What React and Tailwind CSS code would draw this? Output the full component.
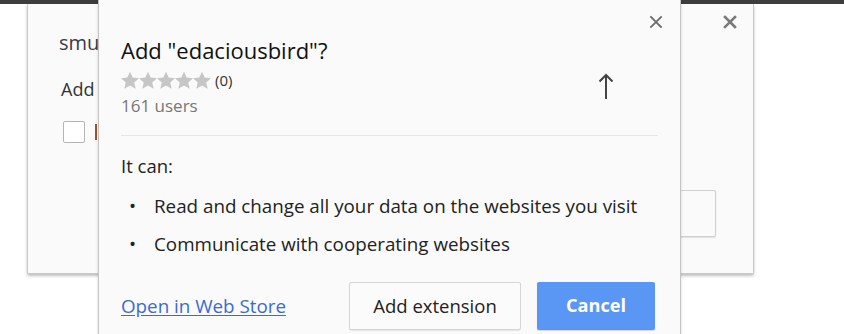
import React from 'react';

const Star = () => (
  <svg width="18" height="19" viewBox="0.5 0.5 23 23" className="block">
    <path
      d="M12 .8l3.4 7.5 8.2.8-6.2 5.5 1.9 8.1L12 18.4l-7.3 4.3 1.9-8.1L.4 9.1l8.2-.8z"
      fill="#c6c6c6"
    />
  </svg>
);

const CloseX = ({ bold }) => (
  <svg width="14" height="14" viewBox="0 0 14 14">
    <path
      d="M2 2l10 10M12 2L2 12"
      stroke={bold ? '#7a7a7a' : '#6e6e6e'}
      strokeWidth={bold ? 2.6 : 1.8}
      strokeLinecap="square"
    />
  </svg>
);

const font = { fontFamily: '"Open Sans", "Noto Sans", "Liberation Sans", sans-serif' };

const App = () => {
  return (
    <div className="relative w-[844px] h-[334px] overflow-hidden bg-white" style={font}>
      {/* window strip at the top */}
      <div className="h-[4px] w-full bg-[#3d3d3d]" />

      {/* dialog behind */}
      <div className="absolute left-[27px] top-[4px] w-[727px] h-[270px] bg-[#fafafa] border-x border-b border-[#c9c9c9] rounded-b-[2px] shadow-[0_2px_3px_rgba(0,0,0,0.25)]">
        <div className="absolute right-[16px] top-[11px]"><CloseX bold /></div>
        <div className="pl-[31px] pt-[25px] text-[20px] leading-[28px] text-[#3a3a4a]">smu</div>
        <div className="pl-[33px] pt-[19px] text-[18px] leading-[26px] text-[#333]">Add</div>
        <div className="flex items-center gap-[10px] pl-[35px] pt-[19px]">
          <div className="w-[22px] h-[22px] rounded-[2px] border border-[#b5b5b5] bg-white" />
          <div className="w-[2px] h-[16px] bg-[#a0522d]" />
        </div>
        <div className="flex justify-end pr-[37px] pt-[47px]">
          <div className="w-[80px] h-[47px] rounded-[2px] border border-[#d0d0d0] bg-[#fafafa] shadow-[0_1px_1px_rgba(0,0,0,0.1)] flex items-center pl-[3px]">
            <div className="w-[2px] h-[14px] bg-[#b89a40]" />
          </div>
        </div>
      </div>

      {/* extension install dialog */}
      <div className="absolute left-[98px] top-0 w-[583px] h-[360px] bg-[#fafafa] border-x border-[#c4c4c4] shadow-[0_0_3px_rgba(0,0,0,0.15)]">
        <div className="absolute right-[17px] top-[15px]"><CloseX /></div>

        <div className="px-[22px] pt-[35px]">
          <div className="flex justify-between">
            <div>
              <div className="text-[22px] leading-[30px] text-[#111]">Add "edaciousbird"?</div>
              <div className="flex items-center mt-[5px]">
                <Star /><Star /><Star /><Star /><Star />
                <span className="ml-[4px] text-[15px] leading-[20px] text-[#333]">(0)</span>
              </div>
              <div className="mt-[5px] text-[17px] leading-[22px] text-[#777]">161 users</div>
            </div>
            <div className="pt-[37px] pr-[44px]">
              <svg width="16" height="28" viewBox="0 0 16 28">
                <path d="M8 27V3M1.5 9.5L8 3l6.5 6.5" fill="none" stroke="#444" strokeWidth="2" />
              </svg>
            </div>
          </div>

          <div className="mt-[18px] h-px bg-[#e6e6e6]" />

          <div className="pt-[17px] text-[18.5px] leading-[26px] text-[#222]">It can:</div>
          <ul className="pt-[8px] text-[18.8px] text-[#222]">
            <li className="flex items-center h-[38px]">
              <span className="w-[33px] pl-[8px]">•</span>
              <span>Read and change all your data on the websites you visit</span>
            </li>
            <li className="flex items-center h-[38px]">
              <span className="w-[33px] pl-[8px]">•</span>
              <span>Communicate with cooperating websites</span>
            </li>
          </ul>

          <div className="flex items-center mt-[19px]">
            <a href="#" className="text-[18.8px] text-[#3a6ad4] underline underline-offset-2">Open in Web Store</a>
            <div className="flex-1" />
            <button className="w-[172px] h-[48px] rounded-[2px] border border-[#d6d6d6] bg-[#fbfbfb] text-[18.5px] text-[#222] shadow-[0_1px_1px_rgba(0,0,0,0.08)]">
              Add extension
            </button>
            <button className="ml-[16px] w-[118px] h-[48px] rounded-[2px] bg-[#5a96f3] text-[18.2px] font-bold text-white shadow-[0_1px_1px_rgba(0,0,0,0.15)]">
              Cancel
            </button>
            <div className="w-[3px]" />
          </div>
        </div>
      </div>
    </div>
  );
};

export default App;
